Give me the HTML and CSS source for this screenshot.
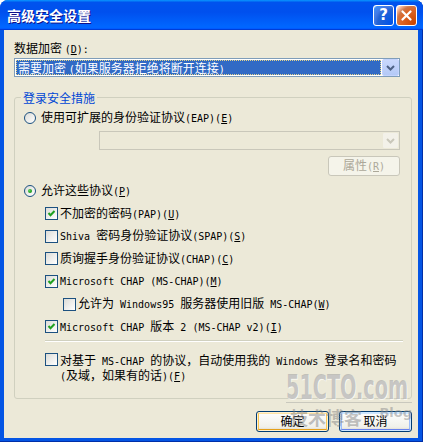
FILE: index.html
```html
<!DOCTYPE html>
<html lang="zh-CN">

<head>
    <meta charset="utf-8">
    <title>高级安全设置</title>
    <link rel="stylesheet" href="styles.css">
</head>

<body>

    <div class="window">
        <div class="titlebar">
            <span class="title">高级安全设置</span>
            <div class="title_buttons">
                <span class="tbtn help">?</span>
                <span class="tbtn close">
                    <svg width="11" height="11" viewBox="0 0 11 11"><path d="M1.5 1.5l8 8M9.5 1.5l-8 8" stroke="#fff" stroke-width="2.2" stroke-linecap="round"/></svg>
                </span>
            </div>
        </div>

        <div class="content">
            <div class="label">数据加密 <span class="m">(<u>D</u>):</span></div>
            <div class="combo">
                <div class="combo_value">需要加密 <span class="m">(</span>如果服务器拒绝将断开连接<span class="m">)</span></div>
                <div class="combo_arrow">
                    <svg width="9" height="6" viewBox="0 0 9 6"><path d="M1 1l3.5 3.5L8 1" fill="none" stroke="#4D6185" stroke-width="2"/></svg>
                </div>
            </div>

            <fieldset class="group">
                <legend>登录安全措施</legend>

                <div class="opt eap">
                    <span class="rb"></span>
                    <span>使用可扩展的身份验证协议<span class="m">(EAP)(<u>E</u>)</span></span>
                </div>
                <div class="combo disabled">
                    <div class="combo_value"></div>
                    <div class="combo_arrow">
                        <svg width="9" height="6" viewBox="0 0 9 6"><path d="M1 1l3.5 3.5L8 1" fill="none" stroke="#C9C7BA" stroke-width="2"/></svg>
                    </div>
                </div>
                <div class="props_row">
                    <button class="btn" disabled>属性<span class="m">(<u>R</u>)</span></button>
                </div>

                <div class="protocols">
                    <div class="opt">
                        <span class="rb valgt"></span>
                        <span>允许这些协议<span class="m">(<u>P</u>)</span></span>
                    </div>
                    <div class="opt sub">
                        <span class="cb valgt"><svg width="11" height="11" viewBox="0 0 11 11"><path d="M2.5 5l2 2.2L8.5 3" fill="none" stroke="#21A121" stroke-width="2"/></svg></span>
                        <span>不加密的密码<span class="m">(PAP)(<u>U</u>)</span></span>
                    </div>
                    <div class="opt sub">
                        <span class="cb"></span>
                        <span><span class="m">Shiva </span>密码身份验证协议<span class="m">(SPAP)(<u>S</u>)</span></span>
                    </div>
                    <div class="opt sub">
                        <span class="cb"></span>
                        <span>质询握手身份验证协议<span class="m">(CHAP)(<u>C</u>)</span></span>
                    </div>
                    <div class="opt sub">
                        <span class="cb valgt"><svg width="11" height="11" viewBox="0 0 11 11"><path d="M2.5 5l2 2.2L8.5 3" fill="none" stroke="#21A121" stroke-width="2"/></svg></span>
                        <span class="m">Microsoft CHAP (MS-CHAP)(<u>M</u>)</span>
                    </div>
                    <div class="opt subsub">
                        <span class="cb"></span>
                        <span>允许为<span class="m"> Windows95 </span>服务器使用旧版<span class="m"> MS-CHAP(<u>W</u>)</span></span>
                    </div>
                    <div class="opt sub">
                        <span class="cb valgt"><svg width="11" height="11" viewBox="0 0 11 11"><path d="M2.5 5l2 2.2L8.5 3" fill="none" stroke="#21A121" stroke-width="2"/></svg></span>
                        <span><span class="m">Microsoft CHAP </span>版本<span class="m"> 2 (MS-CHAP v2)(<u>I</u>)</span></span>
                    </div>
                </div>

                <div class="separator"></div>

                <div class="opt sub multi">
                    <span class="cb"></span>
                    <span>对基于<span class="m"> MS-CHAP </span>的协议，自动使用我的<span class="m"> Windows </span>登录名和密码<br><span class="m">(</span>及域，如果有的话<span class="m">)(<u>F</u>)</span></span>
                </div>
            </fieldset>

            <div class="buttons">
                <button class="btn standard">确定</button>
                <button class="btn hover">取消</button>
            </div>
        </div>

        <div class="watermark">
            <div class="wm_site">51CTO.com</div>
            <div class="wm_line"></div>
            <div class="wm_blog"><span class="wm_cn">技术博客</span><span class="wm_en">Blog</span></div>
        </div>
    </div>

</body></html>
```

FILE: styles.css
```css
* {
    box-sizing: border-box;
}

html,
body {
    margin: 0;
    background: #fff;
}

body {
    font-family: "Noto Sans CJK SC", sans-serif;
    font-size: 12px;
    color: #000;
}

u {
    text-decoration: underline;
}

.m {
    font-family: "DejaVu Sans Mono", "Noto Sans CJK SC", monospace;
    font-size: 10px;
}

.window {
    position: relative;
    width: 423px;
    height: 442px;
    display: flex;
    flex-direction: column;
    background: #0455E4;
    border-radius: 8px 8px 0 0;
    overflow: hidden;
    box-shadow: inset 0 -1px 0 #002FA8, inset -1px 0 0 #002FA8;
}

.titlebar {
    height: 30px;
    flex: none;
    display: flex;
    align-items: center;
    justify-content: space-between;
    padding: 0 6px 0 7px;
    background: linear-gradient(180deg, #0997ff, #0053ee 8%, #0050ee 40%, #0066ff 88%, #0066ff 93%, #005bff 95%, #003dd7 96%, #003dd7);
}

.title {
    color: #fff;
    font-weight: bold;
    font-size: 14px;
    line-height: 16px;
    text-shadow: 1px 1px #0F1089;
}

.title_buttons {
    display: flex;
    gap: 2px;
}

.tbtn {
    width: 21px;
    height: 21px;
    display: flex;
    align-items: center;
    justify-content: center;
    border: 1px solid #fff;
    border-radius: 3px;
    color: #fff;
    font-family: "DejaVu Sans", sans-serif;
    font-weight: bold;
    font-size: 15px;
}

.help {
    background: radial-gradient(circle at 90% 90%, #0054E9 0%, #2263D5 55%, #4479E4 70%, #3C8CF7 90%, #fff 100%);
}

.close {
    background: radial-gradient(circle at 90% 90%, #CC4600 0%, #DC6527 55%, #CD7546 70%, #FFCCB2 90%, #fff 100%);
}

.content {
    flex: 1;
    margin: 0 5px 4px 4px;
    padding: 11px 0 0 10px;
    background: #ECE9D8;
}

.label {
    height: 14px;
    line-height: 14px;
}

.combo {
    display: flex;
    width: 386px;
    height: 19px;
    margin-top: 3px;
    border: 1px solid #7F9DB9;
    background: #fff;
}

.combo_value {
    flex: 1;
    margin: 1px;
    padding-left: 1px;
    line-height: 13px;
    color: #fff;
    background: #316AC5;
    border: 1px dotted #E4D48A;
    white-space: nowrap;
}

.combo_arrow {
    width: 17px;
    display: flex;
    align-items: center;
    justify-content: center;
    background: linear-gradient(180deg, #C9D8FC, #B4C9F6);
    border: 1px solid #C3D3FD;
    border-radius: 2px;
}

.combo.disabled {
    width: 301px;
    margin: 2px 0 0 78px;
    border-color: #C9C7BA;
    background: #ECE9D8;
}

.combo.disabled .combo_value {
    background: transparent;
    border: 0;
}

.combo.disabled .combo_arrow {
    background: #F3F1E9;
    border-color: #ECE9D8;
}

.group {
    width: 398px;
    margin: 14px 0 0;
    padding: 0 0 15px 6px;
    border: 1px solid #D0D0BF;
    border-radius: 3px;
    min-inline-size: auto;
}

.group legend {
    padding: 0 2px;
    line-height: 13px;
    color: #0046D5;
}

.opt {
    display: flex;
    align-items: center;
    height: 14px;
    line-height: 14px;
    white-space: nowrap;
}

.eap {
    height: 23px;
    margin-top: 2px;
}

.opt .rb {
    margin: 0 5px 0 3px;
}

.sub {
    padding-left: 24px;
}

.subsub {
    padding-left: 42px;
}

.rb {
    width: 12px;
    height: 12px;
    flex: none;
    border: 1px solid #1C5180;
    border-radius: 50%;
    background: linear-gradient(135deg, #DCDCD7, #fff);
    display: flex;
    align-items: center;
    justify-content: center;
}

.rb.valgt::after {
    content: "";
    width: 4px;
    height: 4px;
    border-radius: 50%;
    background: radial-gradient(circle at 35% 35%, #5BD65B, #21A121 60%, #0F7A0F);
}

.cb {
    width: 13px;
    height: 13px;
    flex: none;
    margin-right: 2px;
    border: 1px solid #1C5180;
    background: linear-gradient(135deg, #DCDCD7, #fff);
}

.cb svg {
    display: block;
}

.props_row {
    margin-top: 6px;
    padding-left: 307px;
}

.btn {
    height: 21px;
    width: 73px;
    padding: 0;
    font-family: "Noto Sans CJK SC", sans-serif;
    font-size: 12px;
    line-height: 14px;
    color: #000;
    border: 1px solid #003C74;
    border-radius: 3px;
    background: linear-gradient(180deg, #fff, #F0F0EA 80%, #D6D0C5);
}

.props_row .btn {
    width: 72px;
    height: 20px;
    color: #ACA899;
    border-color: #C9C7BA;
    background: #F5F4EA;
}

.standard {
    box-shadow: inset 0 0 0 1px #FFF0CF, inset 0 -2px 0 #E5A01A, inset 2px 0 0 #F9C753, inset -2px 0 0 #F9C753, inset 0 2px 0 #FFE4A6;
}

.hover {
    box-shadow: inset 0 0 0 1px #CEE7FF, inset 0 -2px 0 #6982EE, inset 2px 0 0 #9DBDF9, inset -2px 0 0 #9DBDF9, inset 0 2px 0 #CEE7FF;
}

.protocols {
    display: flex;
    flex-direction: column;
    gap: 8.67px;
    margin-top: 8px;
}

.separator {
    width: 358px;
    margin: 6px 0 0 24px;
    border-top: 1px solid #D0D0BF;
    border-bottom: 1px solid #fff;
}

.multi {
    height: auto;
    align-items: flex-start;
    line-height: 13px;
    margin-top: 11px;
}

.buttons {
    display: flex;
    justify-content: flex-end;
    gap: 10px;
    width: 398px;
    margin-top: 12px;
}

.watermark {
    position: absolute;
    left: 286px;
    top: 372px;
    width: 126px;
    pointer-events: none;
}

.wm_site {
    font-family: "DejaVu Sans Condensed", "DejaVu Sans", sans-serif;
    font-weight: bold;
    font-size: 34px;
    line-height: 30px;
    white-space: nowrap;
    transform: scaleX(0.63);
    transform-origin: 0 0;
    color: rgba(165, 165, 165, 0.6);
    text-shadow: 1px 1px 0 rgba(255, 255, 255, 0.7);
}

.wm_line {
    height: 1px;
    background: rgba(150, 150, 150, 0.4);
}

.wm_blog {
    display: flex;
    align-items: flex-start;
    justify-content: space-between;
    margin-top: 2px;
    padding-left: 4px;
}

.wm_cn {
    font-weight: bold;
    font-size: 18px;
    line-height: 24px;
    color: rgba(120, 120, 120, 0.45);
}

.wm_en {
    font-family: "DejaVu Sans", sans-serif;
    font-weight: bold;
    font-size: 13px;
    line-height: 16px;
    color: rgba(140, 140, 140, 0.5);
}
```
